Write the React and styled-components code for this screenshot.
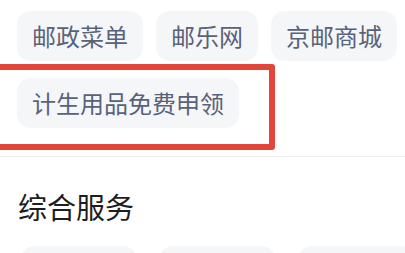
import React from 'react';
import styled, { createGlobalStyle } from 'styled-components';

const GlobalStyle = createGlobalStyle`
  html, body {
    margin: 0;
    padding: 0;
    background: #ffffff;
    overflow: hidden;
  }
  body {
    font-family: "Noto Sans CJK SC", "Noto Sans", sans-serif;
  }
`;

const Page = styled.div`
  width: 405px;
  height: 253px;
  overflow: hidden;
  background: #fff;
`;

const TagSection = styled.div`
  position: relative;
  display: flex;
  flex-wrap: wrap;
  column-gap: 13px;
  row-gap: 17px;
  padding: 11px 0 28px 17px;
  border-bottom: 1px solid #efefef;
`;

const Tag = styled.div`
  display: inline-flex;
  align-items: center;
  height: 50px;
  padding: 0 15px;
  box-sizing: border-box;
  border-radius: 14px;
  background: #f5f6f8;
  color: #59627a;
  font-size: 24px;
  line-height: 1;
  white-space: nowrap;
`;

// annotation frame drawn over the second row
const Highlight = styled.div`
  position: absolute;
  left: -12px;
  top: 64px;
  width: 287px;
  height: 86px;
  box-sizing: border-box;
  border: 6px solid #e2463a;
  border-radius: 3px;
  pointer-events: none;
`;

const Title = styled.h2`
  margin: 0;
  padding: 29px 0 0 18px;
  font-size: 29px;
  font-weight: 400;
  line-height: 40px;
  color: #1e1e1e;
`;

const ServiceGrid = styled.div`
  display: grid;
  grid-template-columns: repeat(3, 117px);
  column-gap: 22px;
  padding: 20px 0 0 20px;
`;

const ServiceCard = styled.div`
  height: 50px;
  border-radius: 14px;
  background: #f5f6f8;
`;

const tags = ['邮政菜单', '邮乐网', '京邮商城', '计生用品免费申领'];

export default function App() {
  return (
    <Page>
      <GlobalStyle />
      <TagSection>
        {tags.map((t) => (
          <Tag key={t}>{t}</Tag>
        ))}
        <Highlight />
      </TagSection>
      <Title>综合服务</Title>
      <ServiceGrid>
        <ServiceCard />
        <ServiceCard />
        <ServiceCard />
      </ServiceGrid>
    </Page>
  );
}
